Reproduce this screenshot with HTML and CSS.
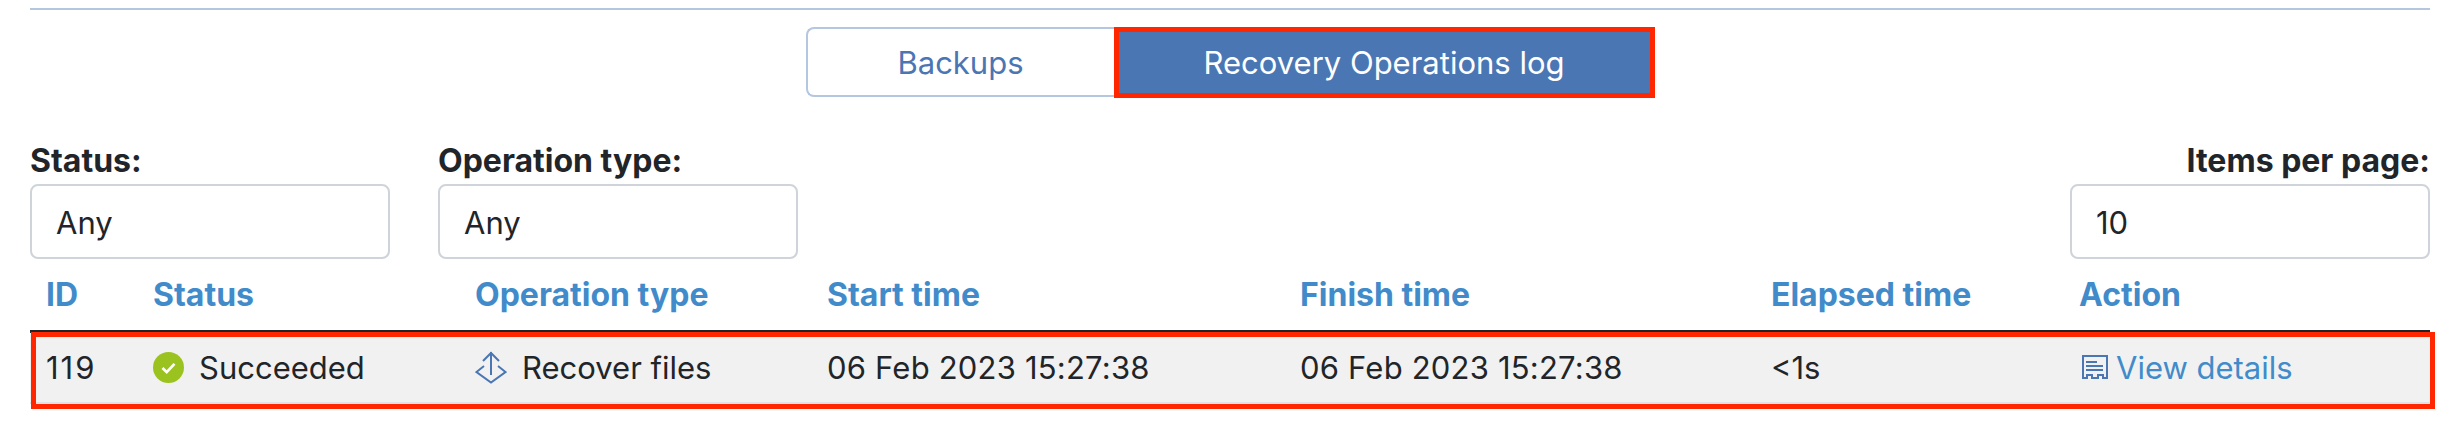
FILE: index.html
```html
<!DOCTYPE html>
<html>
  <head>
    <title>Recovery Operations log</title>
    <meta name="viewport" content="width=device-width, initial-scale=1">
    <link rel="stylesheet" href="styles.css">
  </head>

  <body>
    <div class="container">
      <div class="top-line"></div>

      <div class="tabs">
        <button class="tab">Backups</button>
        <button class="tab tab-active">Recovery Operations log</button>
      </div>

      <div class="filters">
        <div class="filter">
          <label>Status:</label>
          <div class="select-box">Any</div>
        </div>
        <div class="filter">
          <label>Operation type:</label>
          <div class="select-box">Any</div>
        </div>
        <div class="filter filter-right">
          <label>Items per page:</label>
          <div class="select-box">10</div>
        </div>
      </div>

      <div class="table-wrap">
        <table class="log-table">
          <colgroup>
            <col class="col-id">
            <col class="col-status">
            <col class="col-type">
            <col class="col-start">
            <col class="col-finish">
            <col class="col-elapsed">
            <col class="col-action">
          </colgroup>
          <thead>
            <tr>
              <th>ID</th>
              <th>Status</th>
              <th>Operation type</th>
              <th>Start time</th>
              <th>Finish time</th>
              <th>Elapsed time</th>
              <th>Action</th>
            </tr>
          </thead>
          <tbody>
            <tr>
              <td class="row-id">119</td>
              <td>
                <span class="cell-icon">
                  <svg class="icon-status" width="31" height="31" viewBox="0 0 31 31">
                    <circle cx="15.5" cy="15.5" r="15.5" fill="#9bc31f"/>
                    <path d="M9.5 16l4.2 4.2 7.8-8.4" fill="none" stroke="#fff" stroke-width="2.6"/>
                  </svg>
                  Succeeded
                </span>
              </td>
              <td>
                <span class="cell-icon">
                  <svg class="icon-type" width="32" height="33" viewBox="0 0 32 33">
                    <path d="M16 1v23M8 10l8-8 8 8M9 15L1.500 21 16 31.500 30.500 21 23 15" fill="none" stroke="#4a76b4" stroke-width="2"/>
                  </svg>
                  Recover files
                </span>
              </td>
              <td class="date">06 Feb 2023 15:27:38</td>
              <td class="date">06 Feb 2023 15:27:38</td>
              <td>&lt;1s</td>
              <td>
                <a class="details-link" href="#">
                  <svg width="26" height="24" viewBox="0 0 26 24">
                    <path d="M1 23V1h24v22h-4v-3h-5v3h-6v-3H5v3z" fill="none" stroke="#4a76b4" stroke-width="2"/>
                    <path d="M4 7h11M4 11h17M4 15h17" fill="none" stroke="#4a76b4" stroke-width="2"/>
                  </svg>
                  View details
                </a>
              </td>
            </tr>
          </tbody>
        </table>
        <div class="row-mark"></div>
      </div>
    </div>
  </body>
</html>
```

FILE: styles.css
```css
* { box-sizing: border-box; }
body { margin: 0; background-color: #fff; color: #212529; font-family: Inter, "Liberation Sans", sans-serif; font-size: 31px; }
.container { width: 2400px; margin-left: 30px; padding-top: 8px; padding-bottom: 18px; }
.top-line { height: 2px; background-color: #b4c6e0; }

.tabs { display: flex; justify-content: center; margin-top: 17px; height: 71px; }
.tab { width: 308px; height: 70px; padding: 0; background-color: #fff; color: #4a76b4; border: 2px solid #b4c6e0; border-right: none; border-radius: 8px 0 0 8px; font-family: inherit; font-size: 31px; cursor: pointer; }
.tab-active { width: 541px; height: 71px; background-color: #4a76b4; color: #fff; border: 5px solid #ff2600; border-radius: 0; }

.filters { display: flex; gap: 48px; margin-top: 45px; }
.filter { width: 360px; display: flex; flex-direction: column; }
.filter label { font-size: 32px; font-weight: 700; line-height: 36px; margin-bottom: 5px; }
.filter-right { margin-left: auto; text-align: right; }
.select-box { height: 75px; padding: 0 24px; border: 2px solid #ced4da; border-radius: 8px; text-align: left; line-height: 73px; }

.table-wrap { position: relative; }
.log-table { width: 100%; table-layout: fixed; border-collapse: collapse; }
.col-id { width: 107px; }
.col-status { width: 322px; }
.col-type { width: 352px; }
.col-start { width: 473px; }
.col-finish { width: 471px; }
.col-elapsed { width: 308px; }
.log-table th { height: 72px; padding: 0 0 0 16px; border-bottom: 3px solid #212529; color: #428bca; font-size: 32px; font-weight: 700; text-align: left; }
.log-table td { height: 72px; padding: 0 0 0 16px; background-color: #f1f1f1; border-bottom: 2px solid #dee2e6; }
.log-table .row-id { letter-spacing: 2px; }
.log-table .date { letter-spacing: 0.2px; }
.cell-icon { display: flex; align-items: center; gap: 15px; }
.details-link { display: inline-flex; align-items: center; gap: 8px; margin-left: 3px; color: #428bca; text-decoration: none; }
.row-mark { position: absolute; left: 1px; right: -5px; top: 73px; height: 77px; border: 5px solid #ff2600; }
```
